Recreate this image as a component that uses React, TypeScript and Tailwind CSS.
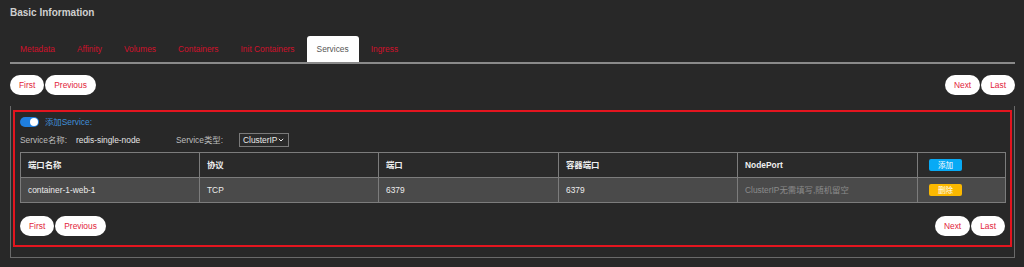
import React from "react";

const font = { fontFamily: '"Liberation Sans", Arial, "Noto Sans CJK SC", sans-serif' };

function PillBtn({ label }: { label: string }) {
  return (
    <button className="h-[20px] rounded-full bg-white px-[9px] text-[8.4px] leading-none text-[#e2243b]">
      {label}
    </button>
  );
}

function Pager() {
  return (
    <div className="flex items-center justify-between">
      <div className="flex gap-[1px]">
        <PillBtn label="First" />
        <PillBtn label="Previous" />
      </div>
      <div className="flex gap-[1px]">
        <PillBtn label="Next" />
        <PillBtn label="Last" />
      </div>
    </div>
  );
}

const tabs = ["Metadata", "Affinity", "Volumes", "Containers", "Init Containers", "Services", "Ingress"];

export default function App() {
  return (
    <div className="h-[267px] w-full overflow-hidden bg-[#282828] pl-[10px] pr-[9px] pt-[7px]" style={font}>
      <div className="h-[12px] text-[10px] font-bold leading-[12px] text-[#d0d0d0]">Basic Information</div>

      <div className="mt-[17px] flex gap-[2px] border-b-2 border-[#8a8a8a]">
        {tabs.map((t) => (
          <div
            key={t}
            className={
              t === "Services"
                ? "flex h-[26px] items-center rounded-t-[3px] bg-white px-[10px] text-[8.4px] text-[#555]"
                : "flex h-[26px] items-center px-[10px] text-[8.4px] text-[#d0112b]"
            }
          >
            {t}
          </div>
        ))}
      </div>

      <div className="mt-[11px]">
        <Pager />
      </div>

      <div className="mt-[11px] border-x border-b border-[#6a6a6a] px-[2px] pb-[10px] pt-[4px]">
        <div className="border-2 border-[#e3151f] px-[5px] pb-[9px] pt-[5px]">
          <div className="flex h-[10px] items-center">
            <div className="flex h-[10px] w-[19px] items-center justify-end rounded-full bg-[#1f7fe0] pr-[1px]">
              <div className="h-[8px] w-[8px] rounded-full bg-white" />
            </div>
            <span className="ml-[6px] text-[8.4px] text-[#3f8fd8]">添加Service:</span>
          </div>

          <div className="mt-[6px] flex h-[14px] items-center text-[8.4px]">
            <span className="w-[56px] text-[#bdbdbd]">Service名称:</span>
            <span className="w-[100px] text-[#e4e4e4]">redis-single-node</span>
            <span className="w-[63px] text-[#bdbdbd]">Service类型:</span>
            <div className="flex h-[14px] w-[50px] items-center justify-between border border-[#7a7a7a] bg-[#2a2a2a] pl-[3px] pr-[4px] text-[#e8e8e8]">
              <span>ClusterIP</span>
              <svg width="6" height="4" viewBox="0 0 6 4" fill="none">
                <path d="M0.8 0.8 L3 3 L5.2 0.8" stroke="#e8e8e8" strokeWidth="1" />
              </svg>
            </div>
          </div>

          <table className="mt-[5px] w-full table-fixed border-collapse text-[8.4px]">
            <colgroup>
              <col className="w-[179px]" />
              <col className="w-[179px]" />
              <col className="w-[180px]" />
              <col className="w-[179px]" />
              <col className="w-[180px]" />
              <col className="w-[88px]" />
            </colgroup>
            <thead>
              <tr className="h-[25px] bg-[#2a2a2a]">
                {["端口名称", "协议", "端口", "容器端口", "NodePort"].map((h) => (
                  <th key={h} className="border border-[#7c7c7c] px-[7px] text-left font-bold text-[#efefef]">
                    {h}
                  </th>
                ))}
                <th className="border border-[#7c7c7c] px-[11px] text-left">
                  <span className="inline-flex h-[12px] w-[33px] items-center justify-center rounded-[2px] bg-[#08aaf5] text-[7.5px] font-normal text-white">
                    添加
                  </span>
                </th>
              </tr>
            </thead>
            <tbody>
              <tr className="h-[25px] bg-[#4a4a4a]">
                <td className="border border-[#7c7c7c] px-[7px] text-[#ececec]">container-1-web-1</td>
                <td className="border border-[#7c7c7c] px-[7px] text-[#ececec]">TCP</td>
                <td className="border border-[#7c7c7c] px-[7px] text-[#ececec]">6379</td>
                <td className="border border-[#7c7c7c] px-[7px] text-[#ececec]">6379</td>
                <td className="border border-[#7c7c7c] px-[7px] text-[#8a8a8a]">ClusterIP无需填写,随机留空</td>
                <td className="border border-[#7c7c7c] px-[11px]">
                  <span className="inline-flex h-[12px] w-[33px] items-center justify-center rounded-[2px] bg-[#fbb800] text-[7.5px] text-white">
                    删除
                  </span>
                </td>
              </tr>
            </tbody>
          </table>

          <div className="mt-[13px]">
            <Pager />
          </div>
        </div>
      </div>
    </div>
  );
}
